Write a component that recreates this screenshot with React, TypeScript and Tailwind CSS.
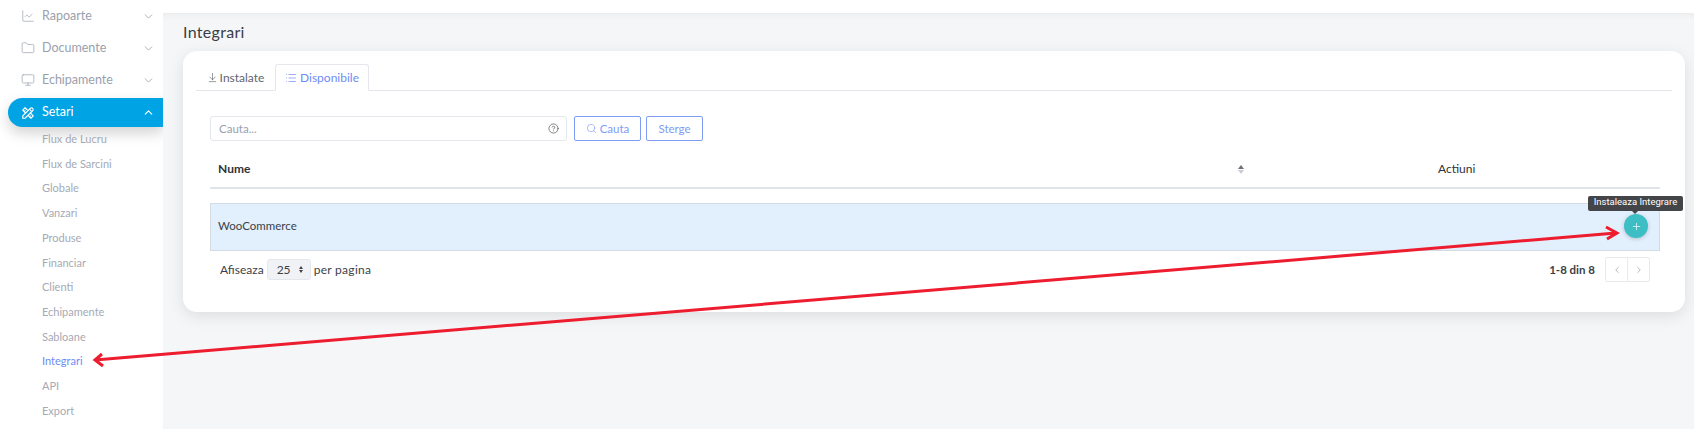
import { ArrowDownToLine, ChartLine, ChevronDown, ChevronLeft, ChevronRight, ChevronUp, CircleHelp, Folder, List, Monitor, Plus, Search } from "lucide-react";
import { TbTools } from "react-icons/tb";

const mainItems = [
  { label: "Rapoarte", Icon: ChartLine },
  { label: "Documente", Icon: Folder },
  { label: "Echipamente", Icon: Monitor },
];

const subItems = ["Flux de Lucru", "Flux de Sarcini", "Globale", "Vanzari", "Produse", "Financiar", "Clienti", "Echipamente", "Sabloane", "Integrari", "API", "Export"];

const Sidebar = () => (
  <aside className="w-[163px] shrink-0 bg-white h-[429px] overflow-hidden relative z-10">
    {mainItems.map(({ label, Icon }) => (
      <div key={label} className="h-[32px] pl-[21px] pr-[8px] flex items-center text-[12.5px] text-[#9aa0ad]">
        <Icon size={14} strokeWidth={1.2} className="mr-[7px] shrink-0" />
        <span className="flex-1">{label}</span>
        <ChevronDown size={13} strokeWidth={1.5} />
      </div>
    ))}
    <div className="mt-[2px] ml-[8px] h-[29px] pl-[13px] pr-[8px] flex items-center text-[12.5px] text-white bg-[#00a4e4] rounded-l-[15px] shadow-[0_6px_14px_rgba(0,0,0,0.18)]">
      <TbTools size={14} className="mr-[7px] shrink-0" />
      <span className="flex-1">Setari</span>
      <ChevronUp size={13} strokeWidth={2} />
    </div>
    <ul>
      {subItems.map((item) => (
        <li key={item} className={`h-[24.7px] pl-[42px] flex items-center text-[11px] ${item === "Integrari" ? "text-[#6e8bf5]" : "text-[#a5aab5]"}`}>
          {item}
        </li>
      ))}
    </ul>
  </aside>
);

const Tabs = () => (
  <div className="flex items-end h-[26px] border-b border-[#e4e7ec] text-[12px]">
    <div className="w-[79px] flex items-center justify-center gap-[2px] h-full text-[#5f6470]">
      <ArrowDownToLine size={11} strokeWidth={1.4} />
      Instalate
    </div>
    <div className="w-[94px] -mb-px flex items-center justify-center gap-[3px] h-[27px] bg-white border border-b-white border-[#e4e7ec] rounded-t-[3px] text-[#6e8bf5]">
      <List size={12} strokeWidth={1.4} />
      Disponibile
    </div>
  </div>
);

const SearchBar = () => (
  <div className="flex items-center mt-[25px] ml-[14px] text-[11.5px]">
    <div className="w-[357px] h-[25px] flex items-center justify-between px-[8px] border border-[#e4e7ec] rounded-[3px] text-[#9aa0ad]">
      <span>Cauta...</span>
      <CircleHelp size={11} strokeWidth={1.4} className="text-[#444] mr-[-1px]" />
    </div>
    <button className="ml-[7px] w-[67px] h-[25px] flex items-center justify-center gap-[3px] border border-[#7f9cf5] rounded-[2px] text-[#7f9cf5]">
      <Search size={11} strokeWidth={1.4} />
      Cauta
    </button>
    <button className="ml-[5px] w-[57px] h-[25px] flex items-center justify-center border border-[#7f9cf5] rounded-[2px] text-[#7f9cf5]">
      Sterge
    </button>
  </div>
);

const Table = () => (
  <div className="ml-[14px] w-[1450px]">
    <div className="mt-[10px] h-[38px] flex items-center border-b-2 border-[#e0e3e8] text-[12px] text-[#2f3238]">
      <span className="w-[1000px] pl-[8px] font-bold">Nume</span>
      <span className="w-[62px] flex flex-col items-center gap-[1px]">
        <span className="w-0 h-0 border-x-[3px] border-x-transparent border-b-[4px] border-b-[#6b7078]" />
        <span className="w-0 h-0 border-x-[3px] border-x-transparent border-t-[4px] border-t-[#c9ccd1]" />
      </span>
      <span className="ml-[166px]">Actiuni</span>
    </div>
    <div className="mt-[14px] h-[48px] pb-[2px] flex items-center justify-between pl-[7px] pr-[11px] bg-[#e2effd] border border-[#d5dbe3] text-[11.5px] text-[#3b3f46]">
      WooCommerce
      <div className="relative">
        <button className="w-[24px] h-[24px] rounded-full bg-[#3dbdc4] text-white flex items-center justify-center shadow-[0_1px_4px_rgba(0,0,0,0.2)]">
          <Plus size={11} strokeWidth={1.5} />
        </button>
        <div className="absolute top-[-18px] right-[-35px] w-[95px] h-[15px] bg-[#444548] rounded-[2px] text-white text-[9.5px] leading-[11px] text-center font-['Roboto',sans-serif] whitespace-nowrap">
          Instaleaza Integrare
          <span className="absolute left-[44px] top-[15px] w-0 h-0 border-x-[3px] border-x-transparent border-t-[3px] border-t-[#444548]" />
        </div>
      </div>
    </div>
    <div className="mt-[6px] flex items-center text-[12px] text-[#3b3f46] pl-[10px] pr-[10px]">
      <span>Afiseaza</span>
      <span className="ml-[3px] w-[44px] h-[21px] flex items-center justify-between pl-[9px] pr-[7px] bg-[#f0f2f5] border border-[#e4e7ec] rounded-[3px]">
        25
        <span className="flex flex-col gap-[1px]">
          <span className="w-0 h-0 border-x-[2.5px] border-x-transparent border-b-[3px] border-b-[#444]" />
          <span className="w-0 h-0 border-x-[2.5px] border-x-transparent border-t-[3px] border-t-[#444]" />
        </span>
      </span>
      <span className="ml-[3px] tracking-[0.3px]">per pagina</span>
      <span className="ml-auto font-bold text-[11.5px]">1-8 din 8</span>
      <div className="ml-[10px] w-[45px] h-[25px] flex border border-[#e8eaee] rounded-[2px] text-[#8a8f98]">
        <span className="flex-1 flex items-center justify-center border-r border-[#e8eaee]">
          <ChevronLeft size={10} strokeWidth={1.5} />
        </span>
        <span className="flex-1 flex items-center justify-center">
          <ChevronRight size={10} strokeWidth={1.5} />
        </span>
      </div>
    </div>
  </div>
);

// red annotation drawn over the screenshot
const Annotation = () => (
  <svg className="absolute left-0 top-0 z-20 pointer-events-none" width="1694" height="429" fill="none" stroke="#ed1c2e" strokeWidth="3">
    <path d="M1616 233 L95 360" />
    <path d="M1606 227 L1617 233 L1607 239" />
    <path d="M102 354 L95 360 L103 366" />
  </svg>
);

export default function App() {
  return (
    <div className="relative flex w-[1694px] h-[429px] overflow-hidden bg-white font-['Lato',sans-serif]">
      <Sidebar />
      <main className="flex-1 mt-[13px] bg-[#f5f6f8] pl-[20px] pr-[9px] shadow-[inset_0_6px_8px_-6px_rgba(0,0,0,0.08)]">
        <h1 className="mt-[10px] h-[18px] leading-[18px] text-[16px] text-[#3a3d44] tracking-[0.3px]">Integrari</h1>
        <section className="mt-[10px] h-[261px] bg-white rounded-[14px] shadow-[0_4px_16px_rgba(0,0,0,0.1)] pt-[14px] px-[13px]">
          <Tabs />
          <SearchBar />
          <Table />
        </section>
      </main>
      <Annotation />
    </div>
  );
}
